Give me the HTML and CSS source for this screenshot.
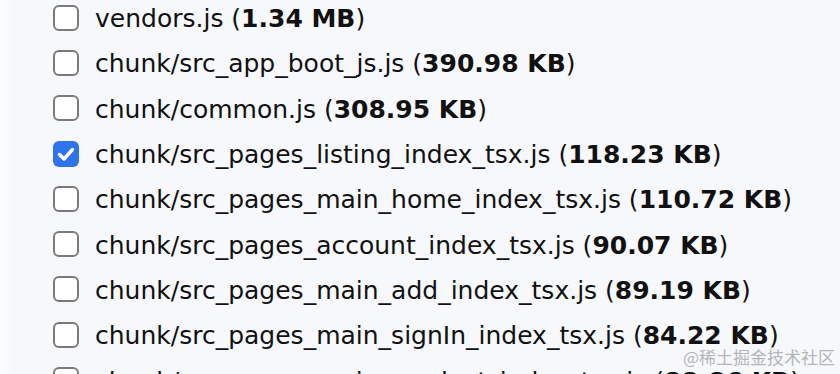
FILE: index.html
```html
<!DOCTYPE html>
<html>
<head>
<meta charset="utf-8">
<link rel="stylesheet" href="styles.css">
</head>
<body>
<div class="edge"></div>
<ul class="list">
  <li class="row"><span class="box"></span><span class="label">vendors.js (<b>1.34 MB</b>)</span></li>
  <li class="row"><span class="box"></span><span class="label">chunk/src_app_boot_js.js (<b>390.98 KB</b>)</span></li>
  <li class="row"><span class="box"></span><span class="label">chunk/common.js (<b>308.95 KB</b>)</span></li>
  <li class="row"><span class="box checked"><svg viewBox="0 0 26 26" width="26" height="26"><path d="M6.5 13.5 L11 18 L19.5 8.5" fill="none" stroke="#fff" stroke-width="3.4" stroke-linecap="round" stroke-linejoin="round"/></svg></span><span class="label">chunk/src_pages_listing_index_tsx.js (<b>118.23 KB</b>)</span></li>
  <li class="row"><span class="box"></span><span class="label">chunk/src_pages_main_home_index_tsx.js (<b>110.72 KB</b>)</span></li>
  <li class="row"><span class="box"></span><span class="label">chunk/src_pages_account_index_tsx.js (<b>90.07 KB</b>)</span></li>
  <li class="row"><span class="box"></span><span class="label">chunk/src_pages_main_add_index_tsx.js (<b>89.19 KB</b>)</span></li>
  <li class="row"><span class="box"></span><span class="label">chunk/src_pages_main_signIn_index_tsx.js (<b>84.22 KB</b>)</span></li>
  <li class="row"><span class="box"></span><span class="label">chunk/src_pages_main_product_index_tsx.js (<b>88.86 KB</b>)</span></li>
</ul>
<div class="watermark">@稀土掘金技术社区</div>
</body>
</html>
```
FILE: styles.css
```css
html, body {
  margin: 0;
  padding: 0;
  height: 374px;
  overflow: hidden;
}
body {
  background: #f7f8fb;
  font-family: "DejaVu Sans", Verdana, sans-serif;
  color: #111;
  position: relative;
}
.edge {
  position: absolute;
  left: 0;
  top: 0;
  bottom: 0;
  width: 14px;
  background: linear-gradient(to right, #fbfcfd, #f7f8fb);
}
.list {
  list-style: none;
  margin: 0;
  padding: 0 0 0 53px;
  position: relative;
}
.row {
  display: flex;
  align-items: center;
  height: 45.3px;
}
.row:first-child {
  margin-top: -5px;
}
.box {
  box-sizing: border-box;
  width: 26px;
  height: 26px;
  border: 2px solid #7a7a7a;
  border-radius: 6px;
  background: #fff;
  flex: none;
  margin-right: 16px;
}
.box.checked {
  border: none;
  background: #2f73ec;
}
.box svg {
  display: block;
}
.label {
  font-size: 25px;
  white-space: nowrap;
  position: relative;
  top: 1px;
}
.label b {
  font-weight: bold;
}
.watermark {
  position: absolute;
  right: 5px;
  bottom: 6px;
  font-family: "Noto Sans CJK SC", sans-serif;
  font-size: 17px;
  line-height: 22px;
  color: #b3b5ba;
}
```
